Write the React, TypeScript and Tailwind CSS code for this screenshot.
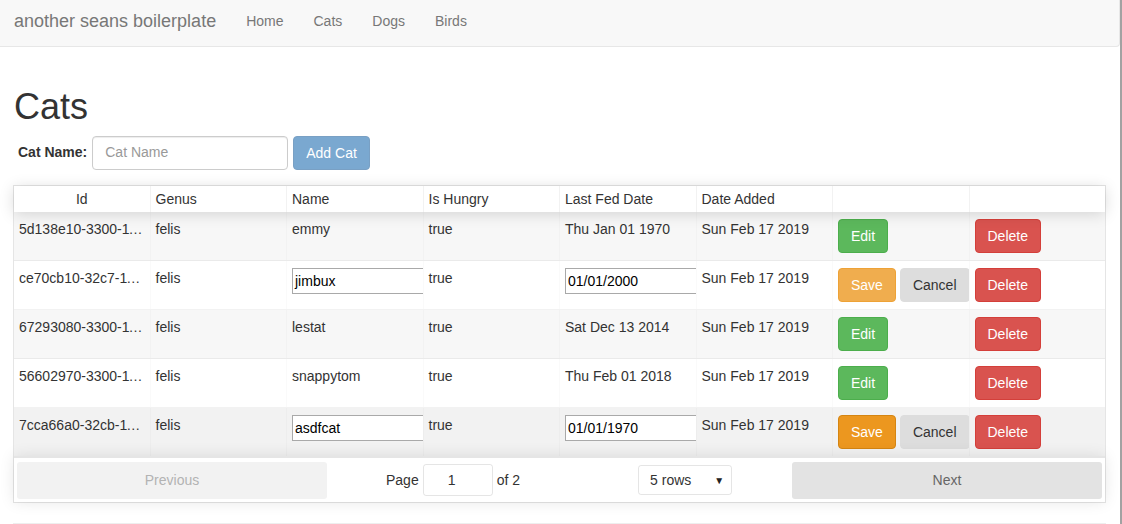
import React from 'react'

type Cat = {
  id: string
  name: string
  hungry: string
  fed: string
  added: string
  editing?: boolean
  hover?: boolean
}

const cats: Cat[] = [
  { id: '5d138e10-3300-11e9-a4b1-1f6d3c2a9b01', name: 'emmy', hungry: 'true', fed: 'Thu Jan 01 1970', added: 'Sun Feb 17 2019' },
  { id: 'ce70cb10-32c7-11e9-9d2e-7b5c1a0e4f22', name: 'jimbux', hungry: 'true', fed: '01/01/2000', added: 'Sun Feb 17 2019', editing: true },
  { id: '67293080-3300-11e9-a4b1-1f6d3c2a9b01', name: 'lestat', hungry: 'true', fed: 'Sat Dec 13 2014', added: 'Sun Feb 17 2019' },
  { id: '56602970-3300-11e9-a4b1-1f6d3c2a9b01', name: 'snappytom', hungry: 'true', fed: 'Thu Feb 01 2018', added: 'Sun Feb 17 2019' },
  { id: '7cca66a0-32cb-11e9-9d2e-7b5c1a0e4f22', name: 'asdfcat', hungry: 'true', fed: '01/01/1970', added: 'Sun Feb 17 2019', editing: true, hover: true },
]

const headers = ['Id', 'Genus', 'Name', 'Is Hungry', 'Last Fed Date', 'Date Added', '', '']

const btn = 'h-[34px] px-[12px] border rounded-[4px] text-[14px] leading-[20px]'

function Cell({ children, last }: { children?: React.ReactNode; last?: boolean }) {
  return (
    <div
      className={`flex-1 min-w-0 overflow-hidden px-[5px] py-[7px] ${last ? '' : 'border-r border-[rgba(0,0,0,0.02)]'}`}
    >
      {children}
    </div>
  )
}

function CellInput({ value }: { value: string }) {
  return (
    <div className="w-[170px] h-[26px] border border-[#a9a9a9] bg-white px-[2px] flex items-center text-[14px] text-black leading-[18px]">
      {value}
    </div>
  )
}

export default function App() {
  return (
    <div className="w-[1122px] h-[524px] overflow-hidden bg-white font-['Liberation_Sans',Arial,sans-serif] text-[14px] text-[#333] border-r-2 border-[#a2a2a2]">
      {/* navbar */}
      <nav className="h-[47px] bg-[#f8f8f8] border-b border-r border-[#e7e7e7] rounded-br-[4px] flex items-start pt-[11px] pl-[14px]">
        <span className="text-[18px] leading-[20px] text-[#777] pr-[15px]">another seans boilerplate</span>
        {['Home', 'Cats', 'Dogs', 'Birds'].map(l => (
          <a key={l} className="px-[15px] text-[14px] leading-[20px] text-[#777]">
            {l}
          </a>
        ))}
      </nav>

      <div className="pl-[13px] pr-[14px]">
        <h1 className="mt-[40px] text-[36px] leading-[39.6px] text-[#333] pl-[1px]">Cats</h1>

        <div className="mt-[9px] flex items-center pl-[5px]">
          <label className="font-bold mr-[5px]">Cat Name:</label>
          <div className="w-[196px] h-[34px] border border-[#ccc] rounded-[4px] px-[12px] flex items-center text-[#999] shadow-[inset_0_1px_1px_rgba(0,0,0,0.075)]">
            Cat Name
          </div>
          <button className={`${btn} ml-[5px] bg-[#7aa8d0] border-[#79a0c4] text-white`}>Add Cat</button>
        </div>

        {/* table */}
        <div className="mt-[15px] w-[1093px] border border-[rgba(0,0,0,0.1)] flex flex-col">
          <div className="relative z-10 flex bg-white shadow-[0_2px_15px_0_rgba(0,0,0,0.15)]">
            {headers.map((h, i) => (
              <div
                key={i}
                className={`flex-1 min-w-0 px-[5px] py-[5px] leading-[16px] h-[26px] ${i === 0 ? 'text-center' : ''} ${i < 7 ? 'border-r border-[rgba(0,0,0,0.05)]' : ''}`}
              >
                {h}
              </div>
            ))}
          </div>

          {cats.map((c, r) => (
            <div
              key={c.id}
              className={`flex leading-[20px] ${r < cats.length - 1 ? 'border-b border-[rgba(0,0,0,0.05)]' : ''} ${c.hover ? 'bg-[#f2f2f2]' : r % 2 === 0 ? 'bg-[#f7f7f7]' : 'bg-white'}`}
            >
              <Cell>
                <div className="truncate">{c.id}</div>
              </Cell>
              <Cell>felis</Cell>
              <Cell>{c.editing ? <CellInput value={c.name} /> : c.name}</Cell>
              <Cell>{c.hungry}</Cell>
              <Cell>{c.editing ? <CellInput value={c.fed} /> : c.fed}</Cell>
              <Cell>{c.added}</Cell>
              <Cell>
                {c.editing ? (
                  <div className="flex gap-[4px]">
                    <button
                      className={`${btn} text-white ${c.hover ? 'bg-[#ec971f] border-[#d58512]' : 'bg-[#f0ad4e] border-[#eea236]'}`}
                    >
                      Save
                    </button>
                    <button className={`${btn} bg-[#dddddd] border-[#dddddd] text-[#333]`}>Cancel</button>
                  </div>
                ) : (
                  <button className={`${btn} bg-[#5cb85c] border-[#4cae4c] text-white`}>Edit</button>
                )}
              </Cell>
              <Cell last>
                <button className={`${btn} bg-[#d9534f] border-[#d43f3a] text-white`}>Delete</button>
              </Cell>
            </div>
          ))}

          {/* pagination */}
          <div className="relative z-10 flex items-center bg-white px-[3px] pt-[4px] pb-[3px] border-t-2 border-[rgba(0,0,0,0.1)] shadow-[0_0_15px_0_rgba(0,0,0,0.1)]">
            <button className="w-[310px] h-[37px] rounded-[3px] bg-[#f2f2f2] text-[#b3b3b3]">Previous</button>
            <div className="flex-1 flex items-center">
              <span className="ml-[59px]">Page</span>
              <div className="ml-[4px] w-[70px] h-[32px] border border-[rgba(0,0,0,0.1)] rounded-[3px] flex items-center pl-[24px] text-[#333]">
                1
              </div>
              <span className="ml-[4px]">of 2</span>
              <div className="ml-[118px] w-[94px] h-[30px] border border-[rgba(0,0,0,0.1)] rounded-[3px] flex items-center justify-between pl-[11px] pr-[7px] text-[#333]">
                <span>5 rows</span>
                <span className="text-[10px] text-[#222]">▼</span>
              </div>
            </div>
            <button className="w-[310px] h-[37px] rounded-[3px] bg-[#e3e3e3] text-[#666]">Next</button>
          </div>
        </div>

        <div className="mt-[20px] border-t border-[#eee]" />
      </div>
    </div>
  )
}
